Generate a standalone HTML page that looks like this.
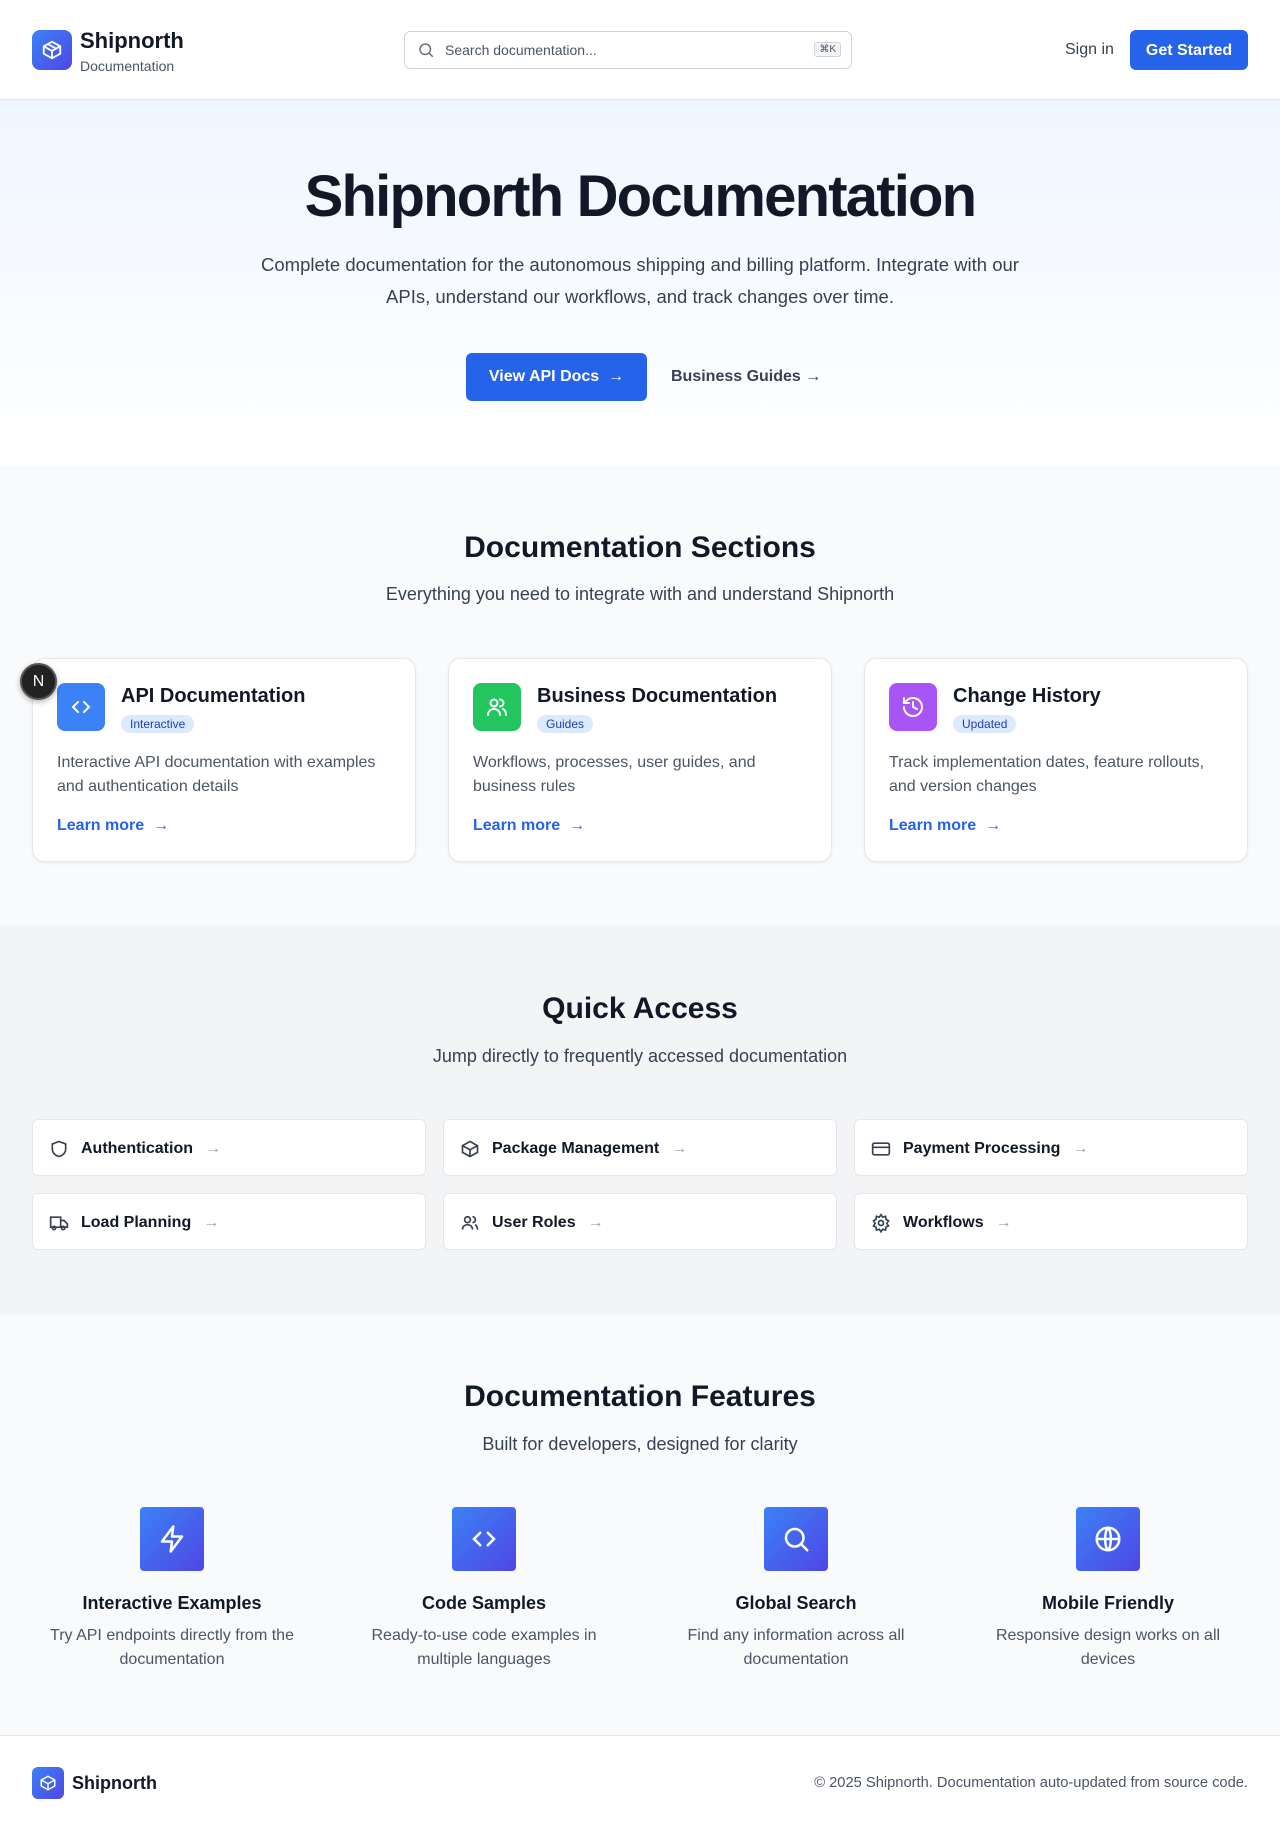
<!DOCTYPE html>
<html><head><meta charset="utf-8"><style>
*{box-sizing:border-box;margin:0;padding:0}
body{width:1280px;height:1832px;font-family:"Liberation Sans",sans-serif;color:#111827;background:#fff;position:relative;overflow:hidden}
.abs{position:absolute}
header{position:absolute;top:0;left:0;width:1280px;height:100px;border-bottom:1px solid #e5e7eb;background:#fff}
.logo{width:40px;height:40px;border-radius:8px;background:linear-gradient(135deg,#3b82f6,#4f46e5);display:flex;align-items:center;justify-content:center}
.center{text-align:center;width:1280px;left:0}
.btn{background:#2563eb;color:#fff;border-radius:6px;font-weight:bold;display:flex;align-items:center;justify-content:center}
.card{position:absolute;top:658px;width:384px;height:204px;background:#fff;border:1px solid #e5e7eb;border-radius:12px;box-shadow:0 1px 3px rgba(0,0,0,.06)}
.card .ic{position:absolute;left:24px;top:24px;width:48px;height:48px;border-radius:8px;display:flex;align-items:center;justify-content:center}
.card h3{position:absolute;left:88px;top:26px;font-size:20px;font-weight:bold}
.card .badge{position:absolute;left:88px;top:56px;background:#dbeafe;color:#1e40af;font-size:12px;padding:2px 9px;border-radius:10px}
.card p{position:absolute;left:24px;top:92px;width:336px;font-size:16px;line-height:24px;color:#4b5563}
.card a{position:absolute;left:24px;top:158px;font-size:16px;color:#2563eb;font-weight:bold;text-decoration:none}
.qa{position:absolute;width:394px;height:57px;background:#fff;border:1px solid #e5e7eb;border-radius:6px;display:flex;align-items:center;padding-left:16px;font-size:16px;font-weight:bold;color:#111827;padding-top:2px}
.qa svg{margin-right:12px}
.qa .ar{color:#9ca3af;margin-left:12px;font-weight:normal}
.feat{position:absolute;top:1507px;width:280px;text-align:center}
.feat .fi{width:64px;height:64px;margin:0 auto;border-radius:4px;background:linear-gradient(135deg,#3b82f6,#4f46e5);display:flex;align-items:center;justify-content:center}
.feat h4{font-size:18px;font-weight:bold;margin-top:22px}
.feat p{font-size:16px;line-height:24px;color:#4b5563;margin-top:10px;padding:0 10px}
</style></head><body>
<header>
<div class="logo abs" style="left:32px;top:30px"><svg width="22" height="22" viewBox="0 0 24 24" fill="none" stroke="#fff" stroke-width="2" stroke-linecap="round" stroke-linejoin="round"><path d="M21 8l-9-5-9 5v8l9 5 9-5z"/><path d="M3 8l9 5 9-5M12 13v8M7.5 5.5l9 5"/></svg></div>
<div class="abs" style="left:80px;top:28px;font-size:22px;font-weight:bold">Shipnorth</div>
<div class="abs" style="left:80px;top:58px;font-size:14px;color:#4b5563">Documentation</div>
<div class="abs" style="left:404px;top:31px;width:448px;height:38px;border:1px solid #d1d5db;border-radius:6px">
<svg class="abs" style="left:12px;top:9px" width="18" height="18" viewBox="0 0 24 24" fill="none" stroke="#6b7280" stroke-width="2"><circle cx="11" cy="11" r="7"/><path d="M21 21l-5-5"/></svg>
<span class="abs" style="left:40px;top:10px;font-size:14px;color:#4b5563">Search documentation...</span>
<span class="abs" style="right:10px;top:10px;font-size:10px;background:#f3f4f6;border:1px solid #d1d5db;border-radius:3px;padding:1px 4px;color:#4b5563">⌘K</span>
</div>
<div class="abs" style="left:1065px;top:41px;font-size:16px;color:#374151">Sign in</div>
<div class="btn abs" style="left:1130px;top:30px;width:118px;height:40px;font-size:16px;padding-top:1px">Get Started</div>
</header>
<div class="abs" style="top:100px;left:0;width:1280px;height:365px;background:linear-gradient(#eff6ff,#fff)"></div>
<div class="abs center" style="top:163px;font-size:58px;font-weight:bold;letter-spacing:-1.8px">Shipnorth Documentation</div>
<div class="abs" style="left:240px;top:249px;width:800px;text-align:center;font-size:18.5px;line-height:32px;color:#374151">Complete documentation for the autonomous shipping and billing platform. Integrate with our APIs, understand our workflows, and track changes over time.</div>
<div class="btn abs" style="left:466px;top:353px;width:181px;height:48px;font-size:16px">View API Docs &nbsp;→</div>
<div class="abs" style="left:671px;top:368px;font-size:16px;font-weight:bold;color:#374151">Business Guides →</div>

<div class="abs" style="top:465px;left:0;width:1280px;height:461px;background:#f9fafb"></div>
<div class="abs center" style="top:531px;font-size:30px;font-weight:bold">Documentation Sections</div>
<div class="abs center" style="top:584px;font-size:18px;color:#374151">Everything you need to integrate with and understand Shipnorth</div>
<div class="card" style="left:32px"><div class="ic" style="background:#3b82f6"><svg width="24" height="24" viewBox="0 0 24 24" fill="none" stroke="#fff" stroke-width="2" stroke-linecap="round"><path d="M9 7l-5 5 5 5M15 7l5 5-5 5"/></svg></div><h3>API Documentation</h3><span class="badge">Interactive</span><p>Interactive API documentation with examples and authentication details</p><a>Learn more &nbsp;→</a></div>
<div class="card" style="left:448px"><div class="ic" style="background:#22c55e"><svg width="24" height="24" viewBox="0 0 24 24" fill="none" stroke="#fff" stroke-width="2" stroke-linecap="round"><circle cx="9" cy="8" r="3.5"/><path d="M3 20c0-4 3-6 6-6s6 2 6 6M15 4.5a3.5 3.5 0 010 7M18 14c2 1 3 3 3 6"/></svg></div><h3>Business Documentation</h3><span class="badge">Guides</span><p>Workflows, processes, user guides, and business rules</p><a>Learn more &nbsp;→</a></div>
<div class="card" style="left:864px"><div class="ic" style="background:#a855f7"><svg width="24" height="24" viewBox="0 0 24 24" fill="none" stroke="#fff" stroke-width="2" stroke-linecap="round"><path d="M3 12a9 9 0 109-9 9.7 9.7 0 00-6.7 2.8L3 8M3 3v5h5M12 7v5l4 2"/></svg></div><h3>Change History</h3><span class="badge">Updated</span><p>Track implementation dates, feature rollouts, and version changes</p><a>Learn more &nbsp;→</a></div>
<div class="abs" style="left:20px;top:663px;width:37px;height:37px;border-radius:50%;background:#222;border:2px solid #555;color:#fff;font-size:16px;display:flex;align-items:center;justify-content:center;box-shadow:0 2px 6px rgba(0,0,0,.3)">N</div>

<div class="abs" style="top:926px;left:0;width:1280px;height:388px;background:#f3f4f6"></div>
<div class="abs center" style="top:992px;font-size:30px;font-weight:bold">Quick Access</div>
<div class="abs center" style="top:1046px;font-size:18px;color:#374151">Jump directly to frequently accessed documentation</div>
<div class="qa" style="left:32px;top:1119px"><svg width="20" height="20" viewBox="0 0 24 24" fill="none" stroke="#374151" stroke-width="2"><path d="M12 3l8 3v6c0 5-4 8-8 9-4-1-8-4-8-9V6z"/></svg>Authentication<span class="ar">→</span></div>
<div class="qa" style="left:443px;top:1119px"><svg width="20" height="20" viewBox="0 0 24 24" fill="none" stroke="#374151" stroke-width="2"><path d="M21 8l-9-5-9 5v8l9 5 9-5z"/><path d="M3 8l9 5 9-5M12 13v8"/></svg>Package Management<span class="ar">→</span></div>
<div class="qa" style="left:854px;top:1119px"><svg width="20" height="20" viewBox="0 0 24 24" fill="none" stroke="#374151" stroke-width="2"><rect x="2" y="5" width="20" height="14" rx="2"/><path d="M2 10h20"/></svg>Payment Processing<span class="ar">→</span></div>
<div class="qa" style="left:32px;top:1193px"><svg width="20" height="20" viewBox="0 0 24 24" fill="none" stroke="#374151" stroke-width="2"><path d="M2 5h12v12H2zM14 9h4l4 4v4h-8"/><circle cx="6" cy="18" r="2"/><circle cx="17" cy="18" r="2"/></svg>Load Planning<span class="ar">→</span></div>
<div class="qa" style="left:443px;top:1193px"><svg width="20" height="20" viewBox="0 0 24 24" fill="none" stroke="#374151" stroke-width="2"><circle cx="9" cy="8" r="3.5"/><path d="M3 20c0-4 3-6 6-6s6 2 6 6M15 4.5a3.5 3.5 0 010 7M18 14c2 1 3 3 3 6"/></svg>User Roles<span class="ar">→</span></div>
<div class="qa" style="left:854px;top:1193px"><svg width="20" height="20" viewBox="0 0 24 24" fill="none" stroke="#374151" stroke-width="2"><circle cx="12" cy="12" r="3"/><path d="M12 2l2 3 3.5-1 .5 3.5 3 2-2 3 2 3-3 1.5-.5 3.5-3.5-1-2 3-2-3-3.5 1-.5-3.5-3-1.5 2-3-2-3 3-2 .5-3.5 3.5 1z"/></svg>Workflows<span class="ar">→</span></div>

<div class="abs" style="top:1314px;left:0;width:1280px;height:421px;background:#f8fafc"></div>
<div class="abs center" style="top:1380px;font-size:30px;font-weight:bold">Documentation Features</div>
<div class="abs center" style="top:1434px;font-size:18px;color:#374151">Built for developers, designed for clarity</div>
<div class="feat" style="left:32px"><div class="fi"><svg width="30" height="30" viewBox="0 0 24 24" fill="none" stroke="#fff" stroke-width="2" stroke-linejoin="round"><path d="M13 2L4 14h8l-1 8 9-12h-8z"/></svg></div><h4>Interactive Examples</h4><p>Try API endpoints directly from the documentation</p></div>
<div class="feat" style="left:344px"><div class="fi"><svg width="30" height="30" viewBox="0 0 24 24" fill="none" stroke="#fff" stroke-width="2" stroke-linecap="round"><path d="M9 7l-5 5 5 5M15 7l5 5-5 5"/></svg></div><h4>Code Samples</h4><p>Ready-to-use code examples in multiple languages</p></div>
<div class="feat" style="left:656px"><div class="fi"><svg width="30" height="30" viewBox="0 0 24 24" fill="none" stroke="#fff" stroke-width="2" stroke-linecap="round"><circle cx="11" cy="11" r="7"/><path d="M21 21l-5-5"/></svg></div><h4>Global Search</h4><p>Find any information across all documentation</p></div>
<div class="feat" style="left:968px"><div class="fi"><svg width="30" height="30" viewBox="0 0 24 24" fill="none" stroke="#fff" stroke-width="2"><circle cx="12" cy="12" r="9"/><path d="M3 12h18M12 3c3 3 3 15 0 18M12 3c-3 3-3 15 0 18"/></svg></div><h4>Mobile Friendly</h4><p>Responsive design works on all devices</p></div>

<div class="abs" style="top:1735px;left:0;width:1280px;height:97px;border-top:1px solid #e5e7eb;background:#fff"></div>
<div class="logo abs" style="left:32px;top:1767px;width:32px;height:32px;border-radius:6px"><svg width="18" height="18" viewBox="0 0 24 24" fill="none" stroke="#fff" stroke-width="2" stroke-linecap="round" stroke-linejoin="round"><path d="M21 8l-9-5-9 5v8l9 5 9-5z"/><path d="M3 8l9 5 9-5M12 13v8"/></svg></div>
<div class="abs" style="left:72px;top:1773px;font-size:18px;font-weight:bold">Shipnorth</div>
<div class="abs" style="right:32px;top:1775px;font-size:14.7px;color:#4b5563">© 2025 Shipnorth. Documentation auto-updated from source code.</div>
</body></html>
